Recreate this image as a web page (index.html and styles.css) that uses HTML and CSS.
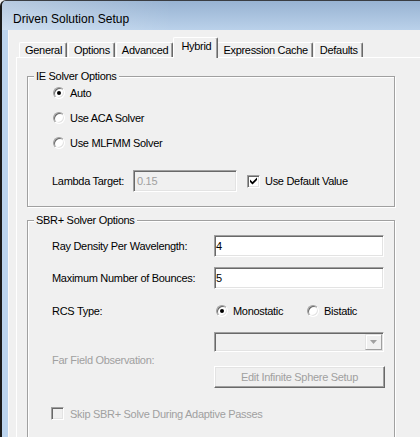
FILE: index.html
```html
<!DOCTYPE html>
<html>
<head>
<meta charset="utf-8">
<title>Driven Solution Setup</title>
<link rel="stylesheet" href="styles.css">
</head>
<body>
<div class="window">
  <div class="titlebar">Driven Solution Setup</div>
  <div class="frame">
    <div class="client">
      <div class="tabs">
        <div class="tab">General</div>
        <div class="tab">Options</div>
        <div class="tab">Advanced</div>
        <div class="tab active">Hybrid</div>
        <div class="tab">Expression Cache</div>
        <div class="tab">Defaults</div>
      </div>
      <div class="panel">
        <div class="group g1">
          <div class="legend">IE Solver Options</div>
          <div class="radio-row"><span class="radio checked"></span><span>Auto</span></div>
          <div class="radio-row"><span class="radio"></span><span>Use ACA Solver</span></div>
          <div class="radio-row"><span class="radio"></span><span>Use MLFMM Solver</span></div>
          <div class="lambda-row">
            <span class="lambda-label">Lambda Target:</span>
            <div class="field lambda-field disabled">0.15</div>
            <span class="check lambda-check"><svg width="7" height="8" viewBox="0 0 7 8"><polygon points="0,2.5 2.5,5 7,0.5 7,3 2.5,7.5 0,5" fill="#000"/></svg></span>
            <span class="check-text">Use Default Value</span>
          </div>
        </div>
        <div class="group g2">
          <div class="legend">SBR+ Solver Options</div>
          <div class="form">
            <span class="lbl">Ray Density Per Wavelength:</span>
            <div class="field">4</div>
            <span class="lbl">Maximum Number of Bounces:</span>
            <div class="field">5</div>
            <span class="lbl">RCS Type:</span>
            <div class="rcs">
              <span class="opt mono"><span class="radio checked"></span><span>Monostatic</span></span>
              <span class="opt"><span class="radio"></span><span>Bistatic</span></span>
            </div>
            <span class="lbl far dis">Far Field Observation:</span>
            <div class="combo"><span class="combo-btn"><svg width="7" height="4" viewBox="0 0 7 4"><polygon points="0,0 7,0 3.5,4" fill="#a0a0a0"/></svg></span></div>
            <div class="button">Edit Infinite Sphere Setup</div>
          </div>
          <div class="skip-row"><span class="check disabled"></span><span class="dis">Skip SBR+ Solve During Adaptive Passes</span></div>
        </div>
      </div>
    </div>
  </div>
</div>
</body>
</html>
```

FILE: styles.css
```css
* { box-sizing: border-box; }
html, body { margin: 0; padding: 0; }
body {
  background: #f0f0f0;
  font-family: "Liberation Sans", Arial, sans-serif;
  font-size: 11px;
  letter-spacing: -0.3px;
  color: #000;
}
.window {
  width: 420px;
  height: 437px;
  overflow: hidden;
  border-top: 1px solid #3a3d42;
  border-left: 2px solid #1c1c1c;
  border-top-left-radius: 6px;
  display: flex;
  flex-direction: column;
  background: #bcd4ee;
}
.titlebar {
  flex: none;
  height: 29px;
  padding: 8px 0 0 11px;
  line-height: 20px;
  font-size: 12px;
  letter-spacing: 0;
  white-space: nowrap;
  background:
    linear-gradient(to right, rgba(255,255,255,0.3), rgba(255,255,255,0) 170px),
    linear-gradient(#98b3d2, #bad1ea);
}
.frame {
  flex: 1;
  display: flex;
  padding-left: 6px;
  min-height: 0;
}
.client {
  flex: 1;
  min-width: 0;
  overflow: hidden;
  background: #f0f0f0;
  border-left: 1px solid #fafafa;
  padding: 7px 0 0 7px;
}
.tabs {
  display: flex;
  align-items: flex-end;
  height: 20px;
  padding-left: 3px;
  position: relative;
  z-index: 1;
}
.tab {
  flex: none;
  height: 15px;
  padding: 0 4px 0 5px;
  line-height: 14px;
  white-space: nowrap;
  background: #f0f0f0;
  border-top: 1px solid #fff;
  border-left: 1px solid #fff;
  border-right: 1px solid #696969;
  box-shadow: inset -1px 0 0 #a0a0a0;
  border-radius: 2px 2px 0 0;
  margin-right: 1px;
}
.tab.active {
  height: 21px;
  padding: 1px 6px 0 7px;
  margin: 0 -1px -1px -1px;
  position: relative;
  z-index: 2;
}
.panel {
  width: 420px;
  height: 420px;
  border-top: 1px solid #fff;
  border-left: 1px solid #fff;
  padding: 18px 0 0 10px;
}
.group {
  width: 368px;
  border: 1px solid #a0a0a0;
  box-shadow: inset 1px 1px 0 #fff, 1px 1px 0 #fff;
  padding: 0 0 0 24px;
}
.g1 { padding-bottom: 14px; }
.g2 { margin-top: 13px; padding-bottom: 30px; }
.legend {
  width: fit-content;
  margin: -7px 0 -3px -18px;
  padding: 0 2px;
  line-height: 13px;
  background: #f0f0f0;
}
.radio-row {
  height: 25px;
  display: flex;
  align-items: center;
  gap: 5px;
  padding-left: 1px;
}
.radio {
  flex: none;
  width: 12px;
  height: 12px;
  border-radius: 50%;
  border: 1px solid;
  border-color: #a0a0a0 #fff #fff #a0a0a0;
  box-shadow: inset 1px 1px 0 #696969, inset -1px -1px 0 #e3e3e3;
  background: #fff;
  display: flex;
  align-items: center;
  justify-content: center;
}
.radio.checked::after {
  content: "";
  width: 4px;
  height: 4px;
  border-radius: 50%;
  background: #000;
}
.lambda-row {
  display: flex;
  align-items: center;
  height: 22px;
  margin-top: 15px;
}
.lambda-label { width: 81px; flex: none; }
.field {
  height: 22px;
  border: 1px solid;
  border-color: #a0a0a0 #fff #fff #a0a0a0;
  box-shadow: inset 1px 1px 0 #696969, inset -1px -1px 0 #e3e3e3;
  background: #fff;
  padding: 0 2px 0 1px;
  line-height: 20px;
  white-space: nowrap;
}
.field.disabled {
  background: #f0f0f0;
  color: #a0a0a0;
  padding-left: 3px;
}
.lambda-field { width: 104px; flex: none; }
.check {
  flex: none;
  width: 13px;
  height: 13px;
  border: 1px solid;
  border-color: #a0a0a0 #fff #fff #a0a0a0;
  box-shadow: inset 1px 1px 0 #696969, inset -1px -1px 0 #e3e3e3;
  background: #fff;
  display: flex;
  align-items: center;
  justify-content: center;
}
.check svg { display: block; }
.check.disabled { background: #f0f0f0; }
.lambda-check { margin-left: 10px; }
.check-text { margin-left: 5px; white-space: nowrap; }
.form {
  display: grid;
  grid-template-columns: 162px 170px;
  grid-template-rows: 22px 22px 23px 20px 26px;
  row-gap: 10px;
  align-items: center;
  margin-top: 11px;
}
.lbl { white-space: nowrap; }
.far { grid-column: 1; grid-row: 4 / span 2; }
.dis { color: #a0a0a0; }
.rcs {
  display: flex;
  align-items: center;
  padding-left: 2px;
}
.opt {
  display: flex;
  align-items: center;
  gap: 5px;
}
.opt.mono { width: 91px; }
.combo {
  height: 20px;
  border: 1px solid;
  border-color: #a0a0a0 #fff #fff #a0a0a0;
  box-shadow: inset 1px 1px 0 #696969, inset -1px -1px 0 #e3e3e3;
  background: #f0f0f0;
  padding: 1px;
  display: flex;
  justify-content: flex-end;
}
.combo-btn {
  width: 17px;
  height: 16px;
  border: 1px solid;
  border-color: #e3e3e3 #a0a0a0 #a0a0a0 #e3e3e3;
  box-shadow: inset 1px 1px 0 #fff;
  background: #f0f0f0;
  display: flex;
  align-items: center;
  justify-content: center;
}
.combo-btn svg { display: block; }
.button {
  grid-column: 2;
  align-self: end;
  width: 171px;
  height: 22px;
  border: 1px solid;
  border-color: #fff #696969 #696969 #fff;
  box-shadow: inset -1px -1px 0 #a0a0a0, inset 1px 1px 0 #e3e3e3;
  display: flex;
  align-items: center;
  justify-content: center;
  color: #a0a0a0;
  white-space: nowrap;
}
.skip-row {
  display: flex;
  align-items: center;
  gap: 6px;
  margin-top: 19px;
  margin-left: -1px;
  white-space: nowrap;
}
```
